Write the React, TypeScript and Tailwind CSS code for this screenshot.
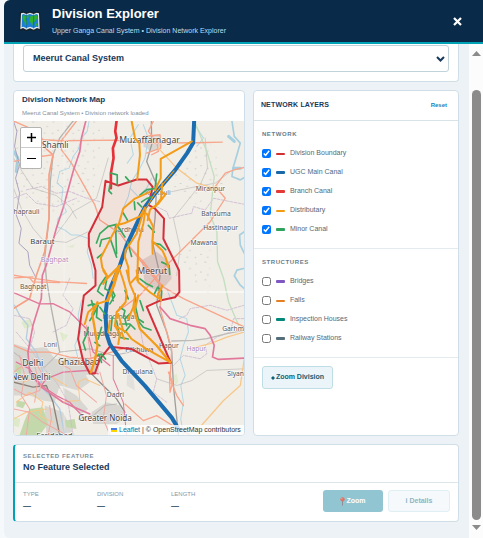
import { useState } from "react";

interface Layer {
  id: string;
  label: string;
  swatch: string;
  on: boolean;
}

const NETWORK: Layer[] = [
  { id: "boundary", label: "Division Boundary", swatch: "h-[2px] bg-[#d32f2f]", on: true },
  { id: "main", label: "UGC Main Canal", swatch: "h-[3px] bg-[#1769aa]", on: true },
  { id: "branch", label: "Branch Canal", swatch: "h-[3px] bg-[#e53935]", on: true },
  { id: "distributary", label: "Distributary", swatch: "h-[2px] bg-[#f39c12]", on: true },
  { id: "minor", label: "Minor Canal", swatch: "h-[3px] bg-[#2fa35b]", on: true },
];

const STRUCTURES: Layer[] = [
  { id: "bridges", label: "Bridges", swatch: "h-[3px] bg-[#7e57c2]", on: false },
  { id: "falls", label: "Falls", swatch: "h-[2px] bg-[#e67e22]", on: false },
  { id: "houses", label: "Inspection Houses", swatch: "h-[3px] bg-[#00897b]", on: false },
  { id: "stations", label: "Railway Stations", swatch: "h-[3px] bg-[#546e7a]", on: false },
];

const PLACES = [
  { name: "Shamli", x: 97, y: 90, size: 25, fill: "#444" },
  { name: "Muzaffarnagar", x: 328, y: 76, size: 26, fill: "#444" },
  { name: "haprauli", x: 12, y: 287, size: 20, fill: "#555" },
  { name: "Baraut", x: 62, y: 378, size: 23, fill: "#444" },
  { name: "Baghpat", x: 93, y: 431, size: 21, fill: "#b08ac0" },
  { name: "Khatauli", x: 405, y: 229, size: 20, fill: "#777" },
  { name: "Miranpur", x: 557, y: 219, size: 20, fill: "#555" },
  { name: "Bahsuma", x: 573, y: 294, size: 20, fill: "#555" },
  { name: "Hastinapur", x: 579, y: 334, size: 20, fill: "#555" },
  { name: "Mawana", x: 541, y: 380, size: 20, fill: "#555" },
  { name: "Sardhana", x: 312, y: 340, size: 20, fill: "#666" },
  { name: "Meerut", x: 382, y: 468, size: 26, fill: "#444" },
  { name: "Baghpat", x: 31, y: 510, size: 20, fill: "#555" },
  { name: "Modinagar", x: 278, y: 602, size: 20, fill: "#666" },
  { name: "Muradnagar", x: 221, y: 651, size: 20, fill: "#555" },
  { name: "Loni", x: 102, y: 685, size: 20, fill: "#666" },
  { name: "Delhi", x: 38, y: 742, size: 26, fill: "#444" },
  { name: "New Delhi", x: 4, y: 784, size: 25, fill: "#444" },
  { name: "Ghaziabad", x: 145, y: 738, size: 25, fill: "#444" },
  { name: "Pilkhuwa", x: 346, y: 699, size: 20, fill: "#555" },
  { name: "Hapur", x: 447, y: 687, size: 20, fill: "#555" },
  { name: "Hapur", x: 529, y: 698, size: 20, fill: "#b08ac0" },
  { name: "Garhm", x: 636, y: 638, size: 20, fill: "#555" },
  { name: "Siyan", x: 651, y: 773, size: 20, fill: "#555" },
  { name: "Dhaulana", x: 338, y: 766, size: 20, fill: "#555" },
  { name: "Dadri", x: 291, y: 834, size: 20, fill: "#555" },
  { name: "Greater Noida", x: 206, y: 906, size: 24, fill: "#444" },
  { name: "Faridabad", x: 80, y: 956, size: 23, fill: "#444" },
];

function MapIcon() {
  return (
    <svg viewBox="0 0 66 63" className="h-[21px] w-[22px] shrink-0" aria-hidden="true">
      <path d="M2 4 12 1 22 5 33 1 44 5 54 1 63 4 66 60 55 56 45 61 33 57 22 61 11 56 1 61Z" fill="#15202b" />
      <path d="M6 7 13 5 22 9 33 5 44 9 53 5 60 7 62 54 54 51 44 56 33 52 22 56 12 51 4 55Z" fill="#dfe8ea" />
      <path d="M9 11 14 9 22 13 33 9 44 13 52 9 57 11 58 49 53 47 44 51 33 47 22 51 13 47 8 49Z" fill="#1b7fd6" />
      <path d="M11 13 22 15 31 13 26 21 20 25 25 31 23 41 18 46 17 33 11 25Z" fill="#2fb02f" />
      <path d="M33 17 40 14 53 13 56 24 50 26 47 34 43 28 40 44 35 36 31 28Z" fill="#2fb02f" />
      <path d="M49 37 56 38 54 45 48 43Z" fill="#2fb02f" />
      <path d="M22 9V53M44 9V53" stroke="#0b5b9d" strokeWidth="1.5" />
    </svg>
  );
}

function PinIcon() {
  return (
    <svg viewBox="0 0 15 27" className="h-[9px] w-[5px]" aria-hidden="true">
      <path d="M7.5 11V26" stroke="#8d8f94" strokeWidth="3" />
      <circle cx="7.5" cy="7" r="6.5" fill="#df7367" />
      <circle cx="5.5" cy="5" r="2" fill="#f0a59c" />
    </svg>
  );
}

function NetworkMap() {
  return (
    <svg
      viewBox="12 9 690 939"
      preserveAspectRatio="xMidYMid slice"
      className="block h-full w-full"
      fill="none"
      strokeLinejoin="round"
      strokeLinecap="round"
      role="img"
      aria-label="Division network"
    >
      <defs>
        <pattern id="dots" width="61" height="53" patternUnits="userSpaceOnUse">
          <path d="M8 12h3M35 7h3M50 26h3M22 37h3M6 46h2M42 45h3" stroke="#cfcfc8" strokeWidth="3" />
        </pattern>
      </defs>
      <path d="M0 0H720V960H0Z" fill="#f1eee8" />
      <path d="M12 9H290L250 230 140 300 60 250 12 220Z" fill="url(#dots)" />
      <path d="M520 80H610L640 200 560 260 480 210ZM500 390H600V530L540 480Z" fill="url(#dots)" />

      {/* land use */}
      <g fill="#d9d7d2">
        <path d="M12 675 60 690 110 685 135 720 180 725 215 745 240 790 205 815 150 800 135 850 100 845 60 830 12 830Z" />
        <path d="M145 715 230 720 270 735 265 765 210 770 160 755Z" />
        <path d="M160 805 200 830 235 870 215 885 165 850ZM245 880 290 850 330 860 350 895 320 915 250 915Z" />
        <path d="M105 860 160 880 190 940 110 948Z" />
        <path d="M395 425 440 400 478 430 485 480 450 520 405 500Z" fill="#dcd3cd" />
        <path d="M405 55 450 50 455 85 425 100 400 85Z" />
        <path d="M352 755 370 775 375 815 350 800Z" fill="#e2e0dc" />
      </g>
      <g fill="#c3d9ac">
        <path d="M60 870 100 865 115 915 90 948 30 948 45 905Z" />
        <path d="M18 735 38 745 32 770 16 765ZM22 845 50 850 40 868 20 862ZM165 905 195 900 200 930 170 925Z" />
        <path d="M14 895 32 900 28 925 12 920ZM35 610 62 600 70 622 45 630ZM150 640 175 650 160 670Z" fill="#dde9c8" />
        <path d="M490 770 500 765 505 790 495 800ZM170 385 195 378 190 388Z" fill="#e0ebcf" />
      </g>

      {/* water */}
      <g stroke="#b2d7e4" strokeWidth="3">
        <path d="M238 9 232 40 215 60 205 95 190 115 178 150 150 160 142 195 160 210 155 250 170 280 145 300 142 325 165 335 185 350 205 350 240 362 232 400 245 440 250 480" />
        <path d="M400 20 415 60 405 120 390 150 365 190 355 235 340 270" />
        <path d="M360 210 385 235 410 210 425 180" />
        <path d="M550 15 580 60 560 85" />
        <path d="M215 545 205 590 212 640 195 680 205 720" />
        <path d="M470 510 500 590 530 600 535 640 520 680 510 720 525 770 512 800 520 850 512 900 520 948" />
        <path d="M385 20 360 60 370 110 352 135" />
      </g>
      <g stroke="#a6d0e0" strokeWidth="5">
        <path d="M665 9 672 55 690 75 680 110 668 150 665 175 690 185 702 178M702 340 688 350 690 380 702 405M700 450 680 455 672 472 690 500 702 510" />
        <path d="M670 150 690 150M655 55 672 70M12 100 25 120 20 160" strokeWidth="9" />
        <path d="M15 560 30 590 55 620 50 660 80 700 100 760 90 800 120 830 150 870 165 948" stroke="#b4cde0" strokeWidth="4" />
      </g>

      {/* administrative borders */}
      <g stroke="#cdbad0" strokeWidth="2.5" strokeDasharray="9 4">
        <path d="M12 10 22 40 15 85 30 140 18 180 30 225 20 290 35 330 28 375 55 400 60 440 80 480" stroke="#9e94b8" strokeDasharray="none" />
        <path d="M50 215 95 205 140 225 180 220 230 240 270 250" />
        <path d="M12 240 50 225 80 255 140 265 200 240" />
        <path d="M440 265 470 280 478 300 520 290 545 285 550 265 585 275 610 240 660 250 702 258" />
        <path d="M508 600 530 590 540 570 600 560 650 575 702 560" />
        <path d="M702 600 670 600 660 640 620 655 585 680 590 705 570 720 520 710 490 740" />
        <path d="M390 625 400 680 420 730 440 780 430 820 470 850" />
        <path d="M12 590 60 600 75 640 60 690M180 480 160 530 190 570 170 620 130 640" />
        <path d="M20 640 70 700 95 740 140 790 175 850 190 948" />
      </g>

      {/* railways and minor roads */}
      <g stroke="#bdbbb8" strokeWidth="3">
        <path d="M190 9 150 60 130 110 122 190 118 300 105 420 110 480 125 570 150 700" strokeWidth="4" stroke="#b3b1ae" />
        <path d="M12 120 70 210 140 232 180 265 200 300" strokeWidth="2" />
        <path d="M12 210 35 270 70 330 100 365 170 372 235 340" strokeWidth="2" />
        <path d="M130 360 165 315 190 280 260 240 295 120" strokeWidth="2" />
        <path d="M424 9 425 80 410 130 440 200 435 300 427 370 450 470 440 560 470 640 485 700 490 800 505 948" strokeWidth="4" stroke="#a19f9d" />
        <path d="M440 230 510 215 560 205 615 195 660 160" strokeWidth="2" />
        <path d="M585 60 592 150 570 200 490 300 510 390 500 471" strokeWidth="2" />
        <path d="M485 667 550 665 590 660 650 645 702 635" strokeWidth="4" />
        <path d="M240 760 270 790 320 840 345 880" strokeWidth="4" stroke="#8f8d8b" />
        <path d="M440 780 500 800 545 785 590 755 702 750" strokeWidth="2" />
        <path d="M12 700 50 730 105 745 150 700 240 690 310 710 410 690" />
        <path d="M12 790 70 805 110 800 130 850 150 948" stroke="#8d8179" strokeWidth="4" />
        <path d="M206 900 250 890 285 860 320 855" />
      </g>
      <path d="M555 15 590 100 612 175 600 290 620 340 622 430 640 480 655 550 685 620" stroke="#c3dfbf" strokeWidth="4" />

      {/* trunk roads */}
      <g stroke="#f8a68b" strokeWidth="4">
        <path d="M12 9 60 30 100 65 155 68 315 66 400 75 560 74 636 72" />
        <path d="M200 9 155 68 155 95 185 135 255 260 270 305 330 345 370 400 410 450 450 500 520 540 702 625" />
        <path d="M95 70 105 88 130 110 118 170 118 300 105 400 80 471 60 540 12 570" strokeWidth="5" stroke="#f5a083" />
        <path d="M12 130 60 120 130 110" />
        <path d="M12 478 70 475M60 478 70 490 150 492" />
        <path d="M430 9 415 40 440 70 445 100 425 110M400 55 450 50 452 90 410 105" />
        <path d="M702 148 672 155 645 165 615 205 645 240 600 310 470 440 390 530 320 580" />
        <path d="M350 375 400 430 455 500 450 570 470 640 485 690 480 780 500 830 520 860" />
        <path d="M12 470 60 478 150 490 230 495" />
        <path d="M345 855 400 905 440 890 480 915 540 948" />
        <path d="M475 760 488 790 480 820 478 760" />
        <path d="M12 680 60 700 120 700 180 715 240 720 340 690" />
      </g>
      <g stroke="#f8c78a" strokeWidth="3">
        <path d="M445 90 500 150 560 195 600 207 620 205" strokeWidth="4" />
        <path d="M540 690 600 675 650 655 702 640M702 720 690 800 640 845 575 918" strokeWidth="4" />
        <path d="M20 850 60 820 100 850 90 890 130 910M160 848 210 845 205 790 225 780 270 800" />
        <path d="M12 900 50 880 110 870M40 790 110 765 170 800" />
      </g>
      <g stroke="#e2799c" strokeWidth="5">
        <path d="M228 9 215 60 210 100 190 160 160 270 140 330 110 440 98 471 95 540 70 620 55 700 60 760 95 805 160 850 240 885" />
        <path d="M12 522 90 556 130 555 180 580 230 630 250 700 300 740" strokeWidth="4" />
        <path d="M450 565 480 600 540 620 585 630 600 650 612 680 607 715 625 722 702 718" />
        <path d="M20 730 60 750 95 800 110 780 160 760 230 755 265 765" strokeWidth="4" />
        <path d="M95 800 140 830 180 850 230 905" strokeWidth="4" />
        <path d="M310 710 310 780 340 850 350 948" strokeWidth="3" />
      </g>
      <g stroke="#f1aaa2" strokeWidth="3">
        <path d="M12 760 40 740 80 735 100 770 90 815 50 830 12 810M30 710 45 770 35 830 60 870 50 948M70 720 85 780 75 850" />
        <path d="M150 735 180 750 200 800 260 850M12 870 60 880 100 910 170 948M120 860 125 900 115 948" />
        <path d="M230 620 245 730M270 760 290 830 280 900 300 948" />
      </g>

      {/* tile seams */}
      <path d="M163 9V948" stroke="#fff" strokeWidth="1" />
      <path d="M12 520H702" stroke="#fff" strokeWidth="3" />

      <g fontFamily='"Noto Sans", sans-serif' stroke="#fff" strokeWidth="4" strokeOpacity="0.7" paintOrder="stroke">
        {PLACES.map((p) => (
          <text key={p.name + p.y} x={p.x} y={p.y} fontSize={p.size} fill={p.fill}>
            {p.name}
          </text>
        ))}
      </g>

      {/* division boundary */}
      <path
        d="M287 188 325 202 380 184 410 184 428 206 415 260 435 271 462 301 460 361 507 456 508 521 495 536 450 546 410 564 482 732 445 734 365 691 300 684 270 721 255 764 240 764 220 726 205 661 222 531 257 501 257 456 237 381 237 346 277 266Z"
        fill="#e53935"
        fillOpacity="0.07"
        stroke="#d3303c"
        strokeWidth="6"
      />

      {/* branch and main canals */}
      <path d="M320 9 316 40 320 60 309 90 311 120 303 165 303 210" stroke="#e5323a" strokeWidth="8" />
      <path d="M410 265 432 225" stroke="#e5323a" strokeWidth="6" />
      <path
        d="M552 9 549 75 531 105 495 156 435 226 405 266 385 306 350 381 330 441 305 500 292 541 287 586 290 646 300 676 335 726 405 801 485 896 510 938"
        stroke="#1c6db0"
        strokeWidth="12"
        strokeLinecap="butt"
      />

      {/* minor canals, upper reach */}
      <g transform="translate(195 156)" stroke="#3aa860" strokeWidth="5">
        <path d="M108 9 127 14 127 44M152 20 165 35M105 45 102 62 110 70" />
        <path d="M245 12 240 55 215 58 195 75M178 95 180 118M200 95 215 85 232 80M200 110 188 98" />
        <path d="M65 218 75 190 100 168 125 162 150 200M75 228 80 208 105 202 113 225 125 260" />
        <path d="M122 165 125 250M145 128 158 150M158 215 170 258M68 262 85 248" />
        <path d="M235 218 255 222 272 238M260 275 282 285 284 312M220 165 238 185" />
      </g>

      {/* minor canals, lower reach */}
      <g transform="translate(195 456)" stroke="#3aa860" strokeWidth="5">
        <path d="M92 20 75 45 68 62 85 75M95 30 90 55 110 65 115 90M110 55 120 75 105 100" />
        <path d="M40 105 55 100 70 105 55 135M50 90 60 125 45 150M68 100 65 140 80 150M32 238 25 215 38 185 40 170" />
        <path d="M195 25 215 40 232 48M238 70 248 50 260 62 258 90M150 60 160 85M180 70 182 110 190 145 205 155" />
        <path d="M195 90 205 120M165 130 150 145 155 165M135 160 165 160 180 175M185 145 205 170 228 178" />
        <path d="M112 140 108 180M125 150 135 200 160 205M65 255 80 250 92 265M60 215 75 225M80 170 70 205" />
        <path d="M135 110 150 120 145 140M165 165 150 185M75 110 90 130M72 250 80 275" />
      </g>

      {/* distributaries above Khatauli */}
      <g stroke="#f39c1a" strokeWidth="6">
        <path d="M365 9 375 60 388 75 390 110 382 183" />
        <path d="M545 70 452 122 452 180 435 216" />
      </g>
      <path d="M492 158 435 226 410 266" stroke="#f39c1a" strokeWidth="3" />

      {/* distributaries, upper reach */}
      <g transform="translate(195 156)" stroke="#f39c1a" strokeWidth="6">
        <path d="M225 65 180 85 145 115 132 160 112 195 78 262 82 290 98 318" />
        <path d="M210 112 195 138 150 158 125 165" />
        <path d="M205 125 185 190 152 240 150 260 160 290 162 330" />
        <path d="M212 115 205 160 190 215 187 330" />
        <path d="M215 130 235 170 232 215 233 250" />
        <path d="M258 65 272 72 250 100 225 118 218 150" />
        <path d="M262 40 258 85 240 110" />
        <path d="M235 215 262 240 272 262 280 290" />
        <path d="M135 285 95 325M130 290 115 330" strokeWidth="7" />
      </g>

      {/* distributaries, lower reach */}
      <g transform="translate(195 456)" stroke="#f39c1a" strokeWidth="6">
        <path d="M132 -10 118 40 98 90" strokeWidth="9" />
        <path d="M85 0 98 20 85 40M98 90 68 100 40 125 30 160" />
        <path d="M68 95 52 130 60 175 68 225 60 270 48 305" strokeWidth="7" />
        <path d="M135 0 145 30 155 65 152 95 125 125 120 165 135 190 130 220" />
        <path d="M155 0 165 40 188 15M185 0 190 35 225 65 258 88" />
        <path d="M165 40 180 75 175 110 160 145" />
        <path d="M190 75 178 120 195 175 245 225 285 274" strokeWidth="7" />
        <path d="M120 165 155 185 170 205 215 235 285 274" />
        <path d="M140 185 148 205M130 130 145 180M105 150 100 185" />
        <path d="M262 45 250 70 258 88" />
      </g>
    </svg>
  );
}

function LayerList({ layers, onToggle }: { layers: Layer[]; onToggle: (id: string) => void }) {
  return (
    <ul className="flex flex-col">
      {layers.map((layer) => (
        <li key={layer.id}>
          <label className="flex h-[19px] items-center text-[7px] text-[#536878]">
            <input
              type="checkbox"
              checked={layer.on}
              onChange={() => onToggle(layer.id)}
              className="h-[9px] w-[9px] accent-[#0075ff]"
            />
            <span className={`ml-[5px] w-[9px] rounded-[1px] ${layer.swatch}`} />
            <span className="ml-[5px]">{layer.label}</span>
          </label>
        </li>
      ))}
    </ul>
  );
}

function Fact({ label, value }: { label: string; value: string }) {
  return (
    <div className="w-[74px]">
      <dt className="text-[6px] leading-[8px] text-[#8896a3]">{label}</dt>
      <dd className="mt-[3px] text-[8px] leading-[10px] font-bold text-[#153a5b]">{value}</dd>
    </div>
  );
}

export default function App() {
  const [network, setNetwork] = useState(NETWORK);
  const [structures, setStructures] = useState(STRUCTURES);

  const flip = (list: Layer[], id: string) =>
    list.map((l) => (l.id === id ? { ...l, on: !l.on } : l));

  function handleReset() {
    setNetwork(NETWORK);
    setStructures(STRUCTURES);
  }

  return (
    <div className="h-screen bg-[#f6f9fb] pl-1 [font-family:'Liberation_Sans',Arial,sans-serif]">
      <div className="flex h-full flex-col overflow-hidden rounded-l-[6px] bg-[#edf2f6]">
        <header className="flex h-11 shrink-0 items-center border-b-2 border-[#00a3b5] bg-[#092b49] pr-[21px] pl-[15px]">
          <MapIcon />
          <div className="ml-[11px] flex-1">
            <h1 className="text-[13px] leading-[16px] font-bold text-white">Division Explorer</h1>
            <p className="mt-1 text-[7px] leading-[10px] text-[#b9dcee]">
              Upper Ganga Canal System • Division Network Explorer
            </p>
          </div>
          <button aria-label="Close" className="text-white">
            <svg viewBox="0 0 9 9" className="h-[9px] w-[9px]" stroke="currentColor" strokeWidth="2.2">
              <path d="M1 1 8 8M8 1 1 8" />
            </svg>
          </button>
        </header>

        <div className="flex min-h-0 flex-1">
          <main className="flex min-w-0 flex-1 flex-col gap-2 overflow-hidden pr-[10px] pl-[9px]">
            <section className="rounded-b-[4px] border border-t-0 border-[#d0dfe7] bg-white px-[9px] pt-[1px] pb-[9px]">
              <div className="relative">
                <select
                  aria-label="Canal system"
                  className="block h-[27px] w-full appearance-none rounded-[3px] border border-[#c0d2da] bg-white pl-[9px] text-[9px] font-bold text-[#17395a]"
                >
                  <option>Meerut Canal System</option>
                </select>
                <svg viewBox="0 0 9 6" className="pointer-events-none absolute top-[11px] right-1 h-[6px] w-[9px]" fill="none" stroke="#17395a" strokeWidth="2">
                  <path d="M1 1 4.5 4.5 8 1" />
                </svg>
              </div>
            </section>

            <div className="flex gap-2">
              <section className="flex min-w-0 flex-[232] flex-col overflow-hidden rounded-[4px] border border-[#d0dfe7] bg-white">
                <div className="px-2 pt-[3px] pb-[3px]">
                  <h2 className="text-[8px] leading-[11px] font-bold text-[#17395a]">Division Network Map</h2>
                  <p className="mt-[3px] text-[6px] leading-[10px] text-[#80909d]">
                    Meerut Canal System • Division network loaded
                  </p>
                </div>
                <div className="relative h-[314px]">
                  <NetworkMap />
                  <div className="absolute top-[6px] left-[6px] flex flex-col overflow-hidden rounded-[2px] border border-[#b4b4b2] bg-white text-black">
                    <button aria-label="Zoom in" className="flex h-5 w-5 items-center justify-center border-b border-[#ccc]">
                      <svg viewBox="0 0 9 9" className="h-[9px] w-[9px]" stroke="currentColor" strokeWidth="1.5">
                        <path d="M0 4.5H9M4.5 0V9" />
                      </svg>
                    </button>
                    <button aria-label="Zoom out" className="flex h-5 w-5 items-center justify-center">
                      <svg viewBox="0 0 9 9" className="h-[9px] w-[9px]" stroke="currentColor" strokeWidth="1.2">
                        <path d="M0 4.5H9" />
                      </svg>
                    </button>
                  </div>
                  <div className="absolute right-0 bottom-0 flex h-[10px] items-center bg-white/80 px-[3px] text-[7px] whitespace-nowrap text-[#333]">
                    <svg viewBox="0 0 6 4" className="mr-[2px] h-[4px] w-[6px]" aria-hidden="true">
                      <path d="M0 0H6V2H0Z" fill="#4c7be1" />
                      <path d="M0 2H6V4H0Z" fill="#ffd500" />
                    </svg>
                    <a href="#leaflet" className="text-[#0078a8]">Leaflet</a>
                    <span className="ml-[2px]">| © OpenStreetMap contributors</span>
                  </div>
                </div>
              </section>

              <aside className="flex min-w-0 flex-[206] flex-col rounded-[4px] border border-[#d0dfe7] bg-white">
                <div className="flex h-[30px] items-center justify-between border-b border-[#d8e3e9] pr-[11px] pl-[7px]">
                  <h2 className="text-[7px] font-bold tracking-wide text-[#17395a]">NETWORK LAYERS</h2>
                  <button onClick={handleReset} className="text-[6px] font-bold text-[#1583bd]">Reset</button>
                </div>
                <div className="border-b border-[#e3ebef] px-2 pt-2 pb-[9px]">
                  <h3 className="mb-[5px] text-[6px] leading-[10px] font-bold tracking-widest text-[#687d8c]">NETWORK</h3>
                  <LayerList layers={network} onToggle={(id) => setNetwork(flip(network, id))} />
                </div>
                <div className="border-b border-[#e3ebef] px-2 pt-2 pb-[9px]">
                  <h3 className="mb-[5px] text-[6px] leading-[10px] font-bold tracking-widest text-[#687d8c]">STRUCTURES</h3>
                  <LayerList layers={structures} onToggle={(id) => setStructures(flip(structures, id))} />
                </div>
                <div className="px-2 pt-2">
                  <button className="flex h-[23px] items-center gap-[1px] rounded-[3px] border border-[#bfdde4] bg-[#ebf4f8] px-2 text-[7px] font-bold text-[#0f6175]">
                    <svg viewBox="0 0 4 4" className="h-[4px] w-[4px]" fill="currentColor" aria-hidden="true">
                      <path d="M2 0 4 2 2 4 0 2Z" />
                    </svg>
                    Zoom Division
                  </button>
                </div>
              </aside>
            </div>

            <section className="rounded-[4px] border border-l-2 border-[#d0dfe7] border-l-[#00a3b5] bg-white">
              <div className="border-b border-[#dce6eb] px-2 pt-[6px] pb-2">
                <p className="text-[6px] leading-[10px] font-bold tracking-widest text-[#7c8d9a]">SELECTED FEATURE</p>
                <h2 className="text-[9px] leading-[13px] font-bold text-[#17395a]">No Feature Selected</h2>
              </div>
              <div className="flex items-start justify-between px-2 pt-[7px] pb-[9px]">
                <dl className="flex">
                  <Fact label="TYPE" value="—" />
                  <Fact label="DIVISION" value="—" />
                  <Fact label="LENGTH" value="—" />
                </dl>
                <div className="flex gap-[5px] text-[7px] font-bold">
                  <button disabled className="flex h-[22px] w-[60px] items-center justify-center gap-[1px] rounded-[3px] bg-[#90c5d1] text-white">
                    <PinIcon />
                    Zoom
                  </button>
                  <button disabled className="flex h-[22px] w-[62px] items-center justify-center rounded-[3px] border border-[#e0eff4] bg-[#f5f9fc] text-[#8db6c2]">
                    i Details
                  </button>
                </div>
              </div>
            </section>
          </main>

          <div className="flex w-[14px] shrink-0 flex-col items-center bg-[#fcfcfc] pt-[7px] pb-[8px] text-[#8b8b8b]" aria-hidden="true">
            <svg viewBox="0 0 9 5" className="h-[5px] w-[9px]" fill="currentColor">
              <path d="M4.5 0 9 5H0Z" />
            </svg>
            <div className="mt-[34px] mb-[5px] w-[9px] flex-1 rounded-full bg-[#8b8b8b]" />
            <svg viewBox="0 0 9 5" className="h-[5px] w-[9px]" fill="currentColor">
              <path d="M0 0H9L4.5 5Z" />
            </svg>
          </div>
        </div>
      </div>
    </div>
  );
}
